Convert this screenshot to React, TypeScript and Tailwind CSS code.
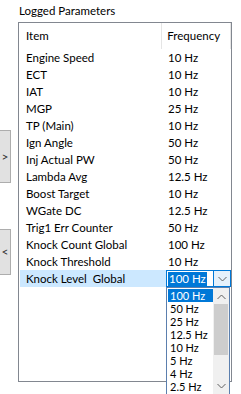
const rows: [string, string][] = [
  ['Engine Speed', '10 Hz'],
  ['ECT', '10 Hz'],
  ['IAT', '10 Hz'],
  ['MGP', '25 Hz'],
  ['TP (Main)', '10 Hz'],
  ['Ign Angle', '50 Hz'],
  ['Inj Actual PW', '50 Hz'],
  ['Lambda Avg', '12.5 Hz'],
  ['Boost Target', '10 Hz'],
  ['WGate DC', '12.5 Hz'],
  ['Trig1 Err Counter', '50 Hz'],
  ['Knock Count Global', '100 Hz'],
  ['Knock Threshold', '10 Hz'],
];

const options = ['100 Hz', '50 Hz', '25 Hz', '12.5 Hz', '10 Hz', '5 Hz', '4 Hz', '2.5 Hz'];

function Chevron({ up = false }: { up?: boolean }) {
  return (
    <svg width="9" height="6" viewBox="0 0 9 6" className="block">
      <path
        d={up ? 'M0.5 5 L4.5 1 L8.5 5' : 'M0.5 1 L4.5 5 L8.5 1'}
        fill="none"
        stroke="#606060"
        strokeWidth="1"
      />
    </svg>
  );
}

function SideButton({ label, className }: { label: string; className: string }) {
  return (
    <div
      className={`w-[11px] bg-[#e1e1e1] border border-l-0 border-[#adadad] flex items-center justify-center text-[12px] text-[#333] ${className}`}
    >
      {label}
    </div>
  );
}

function FreqCombo() {
  return (
    <div className="relative flex h-[17px] w-[65px]">
      <div className="flex h-full w-[48px] items-center border border-[#0078d7] bg-white pl-[1px]">
        <span className="bg-[#0078d7] px-[1px] leading-[14px] text-white">100 Hz</span>
      </div>
      <div className="flex h-full w-[17px] items-center justify-center border border-l-0 border-[#0078d7] bg-[#e5f1fb]">
        <Chevron />
      </div>

      {/* open dropdown list */}
      <div className="absolute left-0 top-[17px] z-10 flex h-[120px] w-[64px] border border-[#5b7fae] bg-white text-[11px]">
        <div className="flex flex-1 flex-col pl-[1px] pt-[1px]">
          {options.map((o, i) => (
            <div
              key={o}
              className={`h-[13px] overflow-hidden pl-[2px] leading-[13px] ${i === 0 ? 'bg-[#0078d7] text-white' : 'text-black'}`}
            >
              {o}
            </div>
          ))}
        </div>
        <div className="flex w-[16px] flex-col items-center bg-[#f0f0f0]">
          <div className="flex h-[16px] items-center justify-center pt-[1px]">
            <Chevron up />
          </div>
          <div className="h-[51px] w-[14px] bg-[#cdcdcd]" />
          <div className="mt-[26px] flex h-[10px] items-center justify-center">
            <Chevron />
          </div>
        </div>
      </div>
    </div>
  );
}

export default function App() {
  return (
    <div
      className="relative h-[394px] w-[241px] overflow-hidden bg-white text-[11.5px] text-black"
      style={{ fontFamily: 'Lato, "Noto Sans", sans-serif' }}
    >
      <div className="h-[22px] pl-[19px] pt-[3px] leading-[16px]">Logged Parameters</div>

      <div className="flex">
        {/* move buttons */}
        <div className="flex w-[18px] flex-col">
          <div className="h-[108px]" />
          <SideButton label=">" className="h-[53px]" />
          <div className="h-[46px]" />
          <SideButton label="<" className="h-[46px]" />
        </div>

        {/* list view */}
        <div className="h-[360px] w-[214px] border border-[#828790] bg-white">
          <div className="flex h-[26px] items-center">
            <div className="w-[143px] pl-[7px]">Item</div>
            <div className="h-full w-px bg-[#e5e5e5]" />
            <div className="w-[68px] pl-[5px]">Frequency</div>
            <div className="h-full w-px bg-[#e5e5e5]" />
          </div>

          {rows.map(([name, freq]) => (
            <div key={name} className="flex h-[17px] items-center leading-[17px]">
              <div className="w-[144px] pl-[7px]">{name}</div>
              <div className="pl-[5px]">{freq}</div>
            </div>
          ))}

          <div className="ml-[1px] flex h-[17px] items-center bg-[#cce8ff] leading-[17px]">
            <div className="w-[146px] pl-[6px]">Knock Level&nbsp; Global</div>
            <FreqCombo />
          </div>
        </div>
      </div>
    </div>
  );
}
